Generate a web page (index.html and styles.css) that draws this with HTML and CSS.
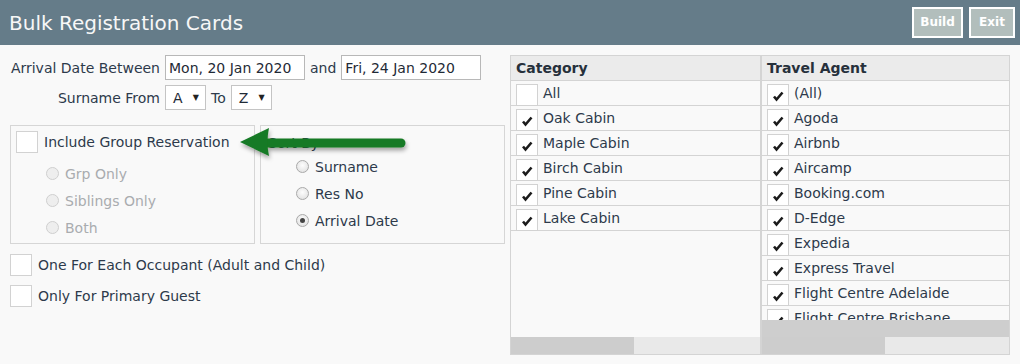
FILE: index.html
```html
<!DOCTYPE html>
<html>
<head>
<meta charset="utf-8">
<link rel="stylesheet" href="styles.css">
</head>
<body>
<header class="topbar">
  <h1 class="title">Bulk Registration Cards</h1>
  <div class="actions">
    <button class="btn btn-build">Build</button>
    <button class="btn btn-exit">Exit</button>
  </div>
</header>
<main class="main">
  <section class="left">
    <div class="form-row">
      <span class="lbl">Arrival Date Between</span>
      <span class="input date">Mon, 20 Jan 2020</span>
      <span class="mid">and</span>
      <span class="input date">Fri, 24 Jan 2020</span>
    </div>
    <div class="form-row row2">
      <span class="lbl">Surname From</span>
      <span class="input sel"><span>A</span><span class="caret">&#9660;</span></span>
      <span class="mid">To</span>
      <span class="input sel"><span>Z</span><span class="caret">&#9660;</span></span>
    </div>
    <div class="boxes">
      <div class="box group">
        <div class="chk-line"><span class="cb"></span><span>Include Group Reservation</span></div>
        <div class="radios dis">
          <div class="radio-line"><span class="rd"></span><span>Grp Only</span></div>
          <div class="radio-line"><span class="rd"></span><span>Siblings Only</span></div>
          <div class="radio-line"><span class="rd"></span><span>Both</span></div>
        </div>
      </div>
      <div class="box sort">
        <div class="sort-title">Sort By</div>
        <div class="radios">
          <div class="radio-line"><span class="rd"></span><span>Surname</span></div>
          <div class="radio-line"><span class="rd"></span><span>Res No</span></div>
          <div class="radio-line"><span class="rd on"></span><span>Arrival Date</span></div>
        </div>
      </div>
    </div>
    <div class="chk-line solo"><span class="cb"></span><span>One For Each Occupant (Adult and Child)</span></div>
    <div class="chk-line solo"><span class="cb"></span><span>Only For Primary Guest</span></div>
    <svg class="pointer" width="180" height="44" viewBox="0 0 180 44">
      <defs>
        <filter id="sh" x="-10%" y="-30%" width="120%" height="180%">
          <feDropShadow dx="1" dy="3" stdDeviation="2" flood-color="#000" flood-opacity="0.35"/>
        </filter>
      </defs>
      <g filter="url(#sh)">
        <line x1="30" y1="20" x2="163" y2="20" stroke="#177a25" stroke-width="9" stroke-linecap="round"/>
        <path d="M2 19 L31 5 Q28 19 31 33 Z" fill="#177a25"/>
      </g>
    </svg>
  </section>
  <section class="panel">
    <div class="col">
      <div class="col-head">Category</div>
      <div class="list">
        <div class="item"><span class="cb"></span><span>All</span></div>
        <div class="item"><span class="cb ck"><svg viewBox="0 0 21 22" class="tick"><path d="M6.5 12.5 L9 15.5 L15 8.5" /></svg></span><span>Oak Cabin</span></div>
        <div class="item"><span class="cb ck"><svg viewBox="0 0 21 22" class="tick"><path d="M6.5 12.5 L9 15.5 L15 8.5" /></svg></span><span>Maple Cabin</span></div>
        <div class="item"><span class="cb ck"><svg viewBox="0 0 21 22" class="tick"><path d="M6.5 12.5 L9 15.5 L15 8.5" /></svg></span><span>Birch Cabin</span></div>
        <div class="item"><span class="cb ck"><svg viewBox="0 0 21 22" class="tick"><path d="M6.5 12.5 L9 15.5 L15 8.5" /></svg></span><span>Pine Cabin</span></div>
        <div class="item"><span class="cb ck"><svg viewBox="0 0 21 22" class="tick"><path d="M6.5 12.5 L9 15.5 L15 8.5" /></svg></span><span>Lake Cabin</span></div>
      </div>
      <div class="hscroll"><span class="thumb"></span></div>
    </div>
    <div class="col col2">
      <div class="col-head">Travel Agent</div>
      <div class="list clip">
        <div class="item"><span class="cb ck"><svg viewBox="0 0 21 22" class="tick"><path d="M6.5 12.5 L9 15.5 L15 8.5" /></svg></span><span>(All)</span></div>
        <div class="item"><span class="cb ck"><svg viewBox="0 0 21 22" class="tick"><path d="M6.5 12.5 L9 15.5 L15 8.5" /></svg></span><span>Agoda</span></div>
        <div class="item"><span class="cb ck"><svg viewBox="0 0 21 22" class="tick"><path d="M6.5 12.5 L9 15.5 L15 8.5" /></svg></span><span>Airbnb</span></div>
        <div class="item"><span class="cb ck"><svg viewBox="0 0 21 22" class="tick"><path d="M6.5 12.5 L9 15.5 L15 8.5" /></svg></span><span>Aircamp</span></div>
        <div class="item"><span class="cb ck"><svg viewBox="0 0 21 22" class="tick"><path d="M6.5 12.5 L9 15.5 L15 8.5" /></svg></span><span>Booking.com</span></div>
        <div class="item"><span class="cb ck"><svg viewBox="0 0 21 22" class="tick"><path d="M6.5 12.5 L9 15.5 L15 8.5" /></svg></span><span>D-Edge</span></div>
        <div class="item"><span class="cb ck"><svg viewBox="0 0 21 22" class="tick"><path d="M6.5 12.5 L9 15.5 L15 8.5" /></svg></span><span>Expedia</span></div>
        <div class="item"><span class="cb ck"><svg viewBox="0 0 21 22" class="tick"><path d="M6.5 12.5 L9 15.5 L15 8.5" /></svg></span><span>Express Travel</span></div>
        <div class="item"><span class="cb ck"><svg viewBox="0 0 21 22" class="tick"><path d="M6.5 12.5 L9 15.5 L15 8.5" /></svg></span><span>Flight Centre Adelaide</span></div>
        <div class="item"><span class="cb ck"><svg viewBox="0 0 21 22" class="tick"><path d="M6.5 12.5 L9 15.5 L15 8.5" /></svg></span><span>Flight Centre Brisbane</span></div>
      </div>
      <div class="greybar"></div>
      <div class="hscroll"><span class="thumb"></span></div>
    </div>
  </section>
</main>
</body>
</html>
```
FILE: styles.css
```css
* { box-sizing: border-box; }
html, body { margin: 0; padding: 0; }
body {
  background: #f9f9f9;
  font-family: "DejaVu Sans", Verdana, sans-serif;
  font-size: 14px;
  color: #2d3a4b;
  width: 1020px;
  height: 364px;
  overflow: hidden;
}
.topbar {
  height: 45px;
  background: #657c89;
  display: flex;
  align-items: center;
  justify-content: space-between;
  padding: 0 5px 0 9px;
}
.title {
  margin: 0;
  font-size: 20px;
  font-weight: normal;
  color: #f7f7f7;
}
.actions { display: flex; gap: 6px; margin-top: -1px; }
.btn {
  height: 31px;
  border: 2px solid #ffffff;
  background: #b2bebc;
  color: #fff;
  font-family: "DejaVu Sans", Verdana, sans-serif;
  font-weight: bold;
  font-size: 12px;
  padding: 0;
}
.btn-build { width: 51px; }
.btn-exit { width: 46px; }

.main {
  display: flex;
  padding: 10px 0 0 10px;
}
.left {
  width: 500px;
  position: relative;
}
.form-row {
  display: flex;
  align-items: center;
  height: 25px;
}
.row2 { margin-top: 5px; }
.lbl {
  width: 150px;
  text-align: right;
  margin-right: 5px;
  white-space: nowrap;
}
.mid { margin: 0 5px; }
.input {
  height: 25px;
  background: #fff;
  border: 1px solid #b8b8b8;
  display: flex;
  align-items: center;
  color: #1f2a36;
  white-space: nowrap;
}
.date { width: 140px; padding-left: 3px; }
.sel {
  width: 41px;
  padding: 0 0 0 7px;
  justify-content: space-between;
  border-color: #c4c4c4;
}
.caret { font-size: 8px; margin-right: 6px; color: #222; }

.boxes {
  display: flex;
  gap: 5px;
  margin-top: 15px;
}
.box {
  width: 245px;
  height: 119px;
  border: 1px solid #d6d6d6;
}
.group { padding: 5px 0 0 5px; }
.chk-line {
  display: flex;
  align-items: center;
  gap: 6px;
  white-space: nowrap;
}
.cb {
  width: 22px;
  height: 22px;
  background: #fff;
  border: 1px solid #d2d2d2;
  flex: none;
  position: relative;
}
.radios { display: flex; flex-direction: column; }
.group .radios { padding: 7px 0 0 30px; }
.radio-line {
  display: flex;
  align-items: center;
  gap: 6px;
  height: 27px;
}
.rd {
  width: 13px;
  height: 13px;
  border-radius: 50%;
  border: 1px solid #a9a9a9;
  background: radial-gradient(circle at 50% 40%, #fdfdfd 0%, #e6e6e6 70%, #d8d8d8 100%);
  flex: none;
  position: relative;
}
.rd.on::after {
  content: "";
  position: absolute;
  left: 3px; top: 3px;
  width: 5px; height: 5px;
  border-radius: 50%;
  background: #444;
}
.dis { color: #a9acaf; }
.dis .rd { border-color: #cfcfcf; background: #eeeeee; }
.sort { padding: 9px 0 0 7px; }
.sort-title { height: 16px; line-height: 16px; }
.sort .radios { padding: 2px 0 0 28px; }

.solo { margin-top: 9px; }
.boxes + .solo { margin-top: 10px; }

.pointer {
  position: absolute;
  left: 228px;
  top: 68px;
}

.panel {
  width: 500px;
  height: 300px;
  border: 1px solid #d4d4d4;
  display: flex;
}
.col {
  width: 250px;
  display: flex;
  flex-direction: column;
  border-right: 1px solid #d4d4d4;
}
.col2 { width: 248px; border-right: none; border-left: 1px solid #d4d4d4; }
.col-head {
  height: 25px;
  background: #ebebeb;
  border-bottom: 1px solid #d4d4d4;
  font-weight: bold;
  padding-left: 5px;
  display: flex;
  align-items: center;
  color: #26303b;
}
.list { flex: 1; overflow: hidden; }
.clip { flex: none; height: 239px; }
.item {
  height: 25px;
  border-bottom: 1px solid #d4d4d4;
  display: flex;
  align-items: flex-end;
  padding-left: 5px;
  gap: 5px;
  white-space: nowrap;
}
.item .cb { height: 22px; margin-bottom: -1px; }
.item > span:last-child { align-self: center; }
.tick {
  position: absolute;
  left: -1px; top: -1px;
  width: 22px; height: 22px;
}
.tick path {
  fill: none;
  stroke: #1b1b1b;
  stroke-width: 2.6;
}
.greybar { height: 17px; background: #cecece; }
.hscroll {
  height: 17px;
  background: #e9e9e9;
  display: flex;
}
.thumb { width: 123px; background: #cdcdcd; }
```
